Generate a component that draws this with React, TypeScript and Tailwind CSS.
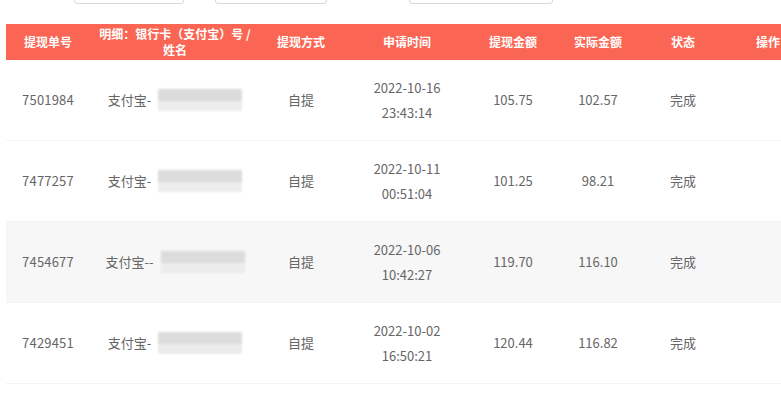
const rows = [
  { id: '7501984', prefix: '支付宝-', date: '2022-10-16', time: '23:43:14', amount: '105.75', real: '102.57', striped: false },
  { id: '7477257', prefix: '支付宝-', date: '2022-10-11', time: '00:51:04', amount: '101.25', real: '98.21', striped: false },
  { id: '7454677', prefix: '支付宝--', date: '2022-10-06', time: '10:42:27', amount: '119.70', real: '116.10', striped: true },
  { id: '7429451', prefix: '支付宝-', date: '2022-10-02', time: '16:50:21', amount: '120.44', real: '116.82', striped: false },
];

const cols = ['w-[84px]', 'w-[170px]', 'w-[82px]', 'w-[130px]', 'w-[82px]', 'w-[88px]', 'w-[82px]', 'w-[88px]'];

function Blurred() {
  return (
    <span className="inline-flex flex-col w-[84px] h-[22px] blur-[1px]">
      <span className="h-[12px] bg-[#dcdcdc]" />
      <span className="h-[10px] bg-[#ececec]" />
    </span>
  );
}

export default function App() {
  return (
    <div
      className="w-[781px] h-[408px] overflow-hidden bg-white text-[#666]"
      style={{ fontFamily: '"Noto Sans CJK SC", "Microsoft YaHei", sans-serif' }}
    >
      <div className="flex h-[4px] items-end overflow-hidden">
        <div className="ml-[74px] w-[110px] h-[30px] border border-[#d9d9d9] rounded-[3px] shrink-0" />
        <div className="ml-[31px] w-[112px] h-[30px] border border-[#d9d9d9] rounded-[3px] shrink-0" />
        <div className="ml-[82px] w-[144px] h-[30px] border border-[#d9d9d9] rounded-[3px] shrink-0" />
      </div>

      <div className="mt-[20px] ml-[6px] w-[810px]">
        <div className="flex h-[36px] items-center bg-[#fa6653] text-white text-[12px] font-bold">
          <div className={`${cols[0]} text-center`}>提现单号</div>
          <div className={`${cols[1]} text-center leading-[16px]`}>
            明细：银行卡（支付宝）号 /<br />姓名
          </div>
          <div className={`${cols[2]} text-center`}>提现方式</div>
          <div className={`${cols[3]} text-center`}>申请时间</div>
          <div className={`${cols[4]} text-center`}>提现金额</div>
          <div className={`${cols[5]} text-center`}>实际金额</div>
          <div className={`${cols[6]} text-center`}>状态</div>
          <div className={`${cols[7]} text-center`}>操作</div>
        </div>

        {rows.map((r) => (
          <div
            key={r.id}
            className={`flex h-[81px] items-center text-[13px] border-b border-[#f4f4f4] ${r.striped ? 'bg-[#f7f7f7]' : ''}`}
          >
            <div className={`${cols[0]} text-center tracking-[0.2px]`}>{r.id}</div>
            <div className={`${cols[1]} flex items-center justify-center gap-[7px]`}>
              <span>{r.prefix}</span>
              <Blurred />
            </div>
            <div className={`${cols[2]} text-center`}>自提</div>
            <div className={`${cols[3]} text-center leading-[25px]`}>
              {r.date}
              <br />
              {r.time}
            </div>
            <div className={`${cols[4]} text-center`}>{r.amount}</div>
            <div className={`${cols[5]} text-center`}>{r.real}</div>
            <div className={`${cols[6]} text-center`}>完成</div>
            <div className={`${cols[7]} text-center`} />
          </div>
        ))}
      </div>
    </div>
  );
}
